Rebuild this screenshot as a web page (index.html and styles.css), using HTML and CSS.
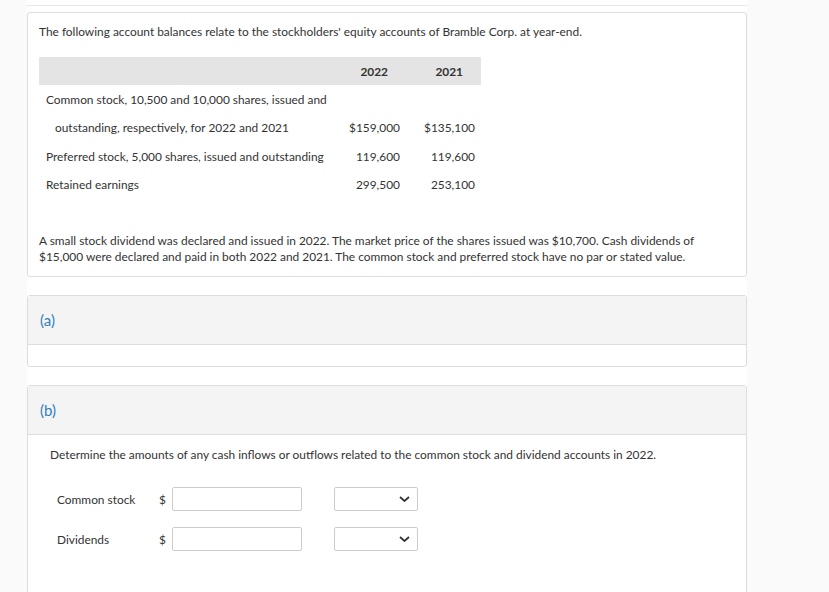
FILE: index.html
```html
<!DOCTYPE html>
<html lang="en">
<head>
  <meta charset="UTF-8" />
  <title>Stockholders' equity</title>
  <link rel="stylesheet" href="styles.css">
</head>
<body>
  <div class="page">
    <div class="topbar"></div>

    <!-- question -->
    <div class="card intro">
      <p>The following account balances relate to the stockholders' equity accounts of Bramble Corp. at year-end.</p>
      <table class="balances">
        <colgroup>
          <col class="col-label">
          <col class="col-year">
          <col class="col-year">
        </colgroup>
        <thead>
          <tr>
            <th></th>
            <th>2022</th>
            <th>2021</th>
          </tr>
        </thead>
        <tbody>
          <tr>
            <td>Common stock, 10,500 and 10,000 shares, issued and</td>
            <td></td>
            <td></td>
          </tr>
          <tr>
            <td class="indent">outstanding, respectively, for 2022 and 2021</td>
            <td class="num">$159,000</td>
            <td class="num">$135,100</td>
          </tr>
          <tr>
            <td>Preferred stock, 5,000 shares, issued and outstanding</td>
            <td class="num">119,600</td>
            <td class="num">119,600</td>
          </tr>
          <tr>
            <td>Retained earnings</td>
            <td class="num">299,500</td>
            <td class="num">253,100</td>
          </tr>
        </tbody>
      </table>
      <p class="note">A small stock dividend was declared and issued in 2022. The market price of the shares issued was $10,700. Cash dividends of<br>$15,000 were declared and paid in both 2022 and 2021. The common stock and preferred stock have no par or stated value.</p>
    </div>

    <!-- part a -->
    <div class="card part">
      <div class="part-head">(a)</div>
      <div class="part-body short"></div>
    </div>

    <!-- part b -->
    <div class="card part">
      <div class="part-head">(b)</div>
      <div class="part-body">
        <p>Determine the amounts of any cash inflows or outflows related to the common stock and dividend accounts in 2022.</p>
        <div class="answers">
          <div class="answer-row">
            <span class="answer-label">Common stock</span>
            <span class="dollar">$</span>
            <input type="text" class="amount">
            <div class="dropdown">
              <svg width="11" height="6" viewBox="0 0 11 6"><path d="M1 1l4.5 4 4.5-4" fill="none" stroke="#333" stroke-width="1.8"/></svg>
            </div>
          </div>
          <div class="answer-row">
            <span class="answer-label">Dividends</span>
            <span class="dollar">$</span>
            <input type="text" class="amount">
            <div class="dropdown">
              <svg width="11" height="6" viewBox="0 0 11 6"><path d="M1 1l4.5 4 4.5-4" fill="none" stroke="#333" stroke-width="1.8"/></svg>
            </div>
          </div>
        </div>
      </div>
    </div>
  </div>
</body>
</html>
```

FILE: styles.css
```css
body {
  margin: 0;
  background-color: #fafafa;
  font-family: Lato, "Liberation Sans", sans-serif;
  font-size: 11.9px;
  color: #333;
}

.page {
  margin-left: 27px;
  width: 720px;
  min-height: 100vh;
  background-color: #fff;
}

.topbar {
  height: 5px;
  border-bottom: 1px solid #e8e8e8;
}

.card {
  border: 1px solid #ddd;
  border-radius: 3px;
  background-color: #fff;
}

p {
  margin: 0;
  line-height: 16px;
}

.intro {
  margin-top: 6px;
  padding: 11px;
}

.balances {
  margin-top: 17px;
  border-collapse: collapse;
  table-layout: fixed;
  width: 442px;
}

.col-label {
  width: 292px;
}

.col-year {
  width: 75px;
}

.balances th {
  background-color: #e4e4e4;
  height: 28px;
  padding: 0 18px 0 0;
  font-weight: bold;
  text-align: right;
}

.balances td {
  height: 28.5px;
  padding: 0 7px;
  white-space: nowrap;
}

.balances td.indent {
  padding-left: 16px;
}

.balances td.num {
  text-align: right;
  padding-right: 6px;
}

.note {
  margin-top: 34px;
}

.part {
  margin-top: 18px;
}

.part-head {
  height: 48px;
  line-height: 48px;
  padding-left: 12px;
  background-color: #f4f4f4;
  border-bottom: 1px solid #ddd;
  color: #2f7fb8;
  font-size: 15px;
}

.part-body {
  padding: 12px 22px 60px;
}

.part-body.short {
  height: 21px;
  padding: 0;
}

.answers {
  margin-top: 24px;
  padding-left: 7px;
  display: flex;
  flex-direction: column;
  gap: 16px;
}

.answer-row {
  display: flex;
  align-items: center;
}

.answer-label {
  width: 102px;
}

.dollar {
  width: 13px;
}

.amount {
  box-sizing: border-box;
  width: 130px;
  height: 24px;
  margin: 0;
  border: 1px solid #ccc;
  border-radius: 2px;
}

.dropdown {
  box-sizing: border-box;
  width: 84px;
  height: 24px;
  margin-left: 32px;
  border: 1px solid #ccc;
  border-radius: 2px;
  display: flex;
  align-items: center;
  justify-content: flex-end;
  padding-right: 7px;
}
```
